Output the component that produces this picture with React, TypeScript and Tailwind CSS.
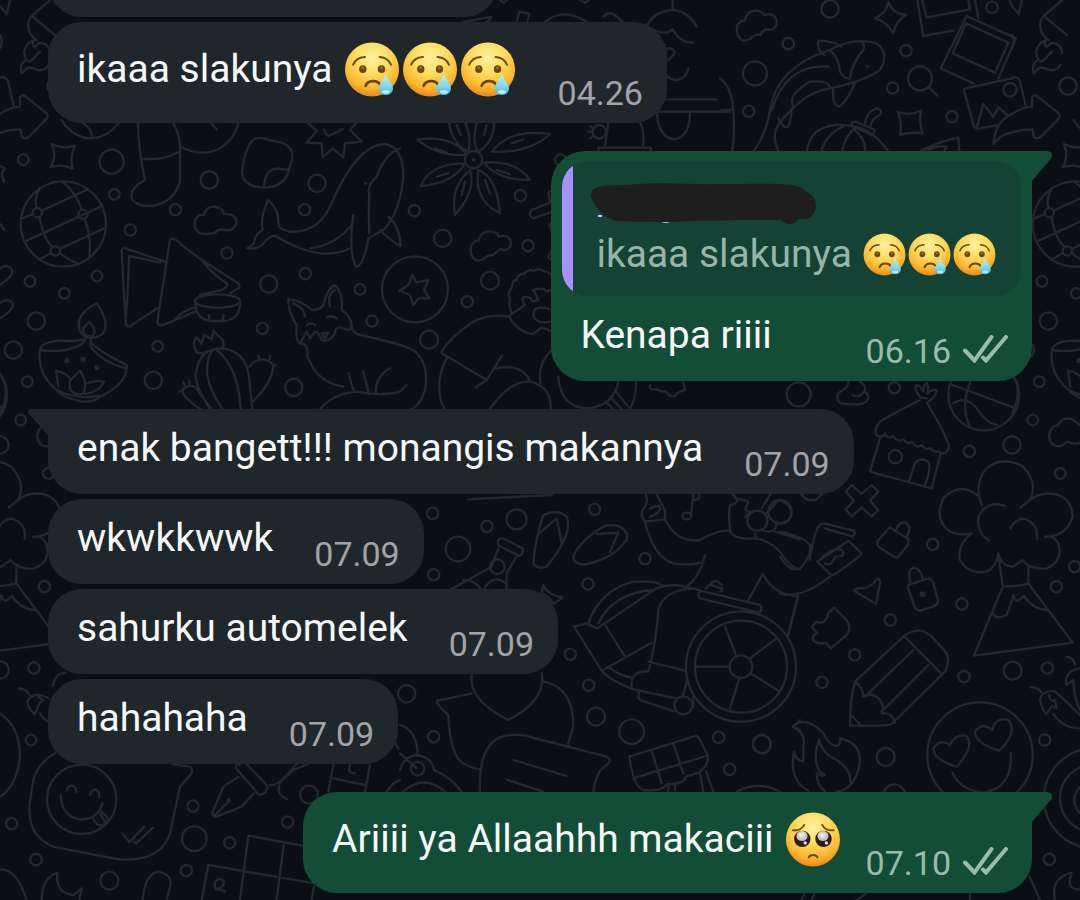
import React from 'react';

type EmojiKind = 'cry' | 'plead';

interface Message {
  text: string;
  time: string;
  mine?: boolean;
  tail?: boolean;
  emojis?: EmojiKind[];
  quote?: { text: string; emojis: EmojiKind[] };
}

interface DoodleRegion {
  transforms: string[];
  path: string;
  circles: number[][];
  dots?: number[][];
}

const messages: Message[] = [
  { text: 'ikaaa slakunya', time: '04.26', emojis: ['cry', 'cry', 'cry'] },
  {
    text: 'Kenapa riiii',
    time: '06.16',
    mine: true,
    tail: true,
    quote: { text: 'ikaaa slakunya', emojis: ['cry', 'cry', 'cry'] }
  },
  { text: 'enak bangett!!! monangis makannya', time: '07.09', tail: true },
  { text: 'wkwkkwwk', time: '07.09' },
  { text: 'sahurku automelek', time: '07.09' },
  { text: 'hahahaha', time: '07.09' },
  { text: 'Ariiii ya Allaahhh makaciii', time: '07.10', mine: true, tail: true, emojis: ['plead'] }
];

// Wallpaper line art, drawn at 3x. Some regions repeat once the tile wraps around.
const doodles: DoodleRegion[] = [
  {
    // rocket, globe, stocking, whale
    transforms: ['translate(0 0) scale(.33333)', 'translate(1012 0) scale(.33333)'],
    path:
      'M0 18L20 42L30 0M150 0L95 48L165 105M95 48C75 70 85 105 110 120' +
      'M65 220C60 200 65 185 80 180C65 160 75 130 100 122C95 140 105 145 115 130C135 125 150 140 150 160M65 220L80 205Q85 200 100 205C115 215 135 212 145 195M85 185C100 185 105 165 120 155' +
      'M0 105Q10 120 0 145M0 232Q18 228 24 245L42 320' +
      'M0 342Q30 322 60 320V292Q65 282 75 288L140 340Q146 348 140 356L85 412Q70 418 65 410L62 388Q30 388 0 398' +
      'M185 360Q220 415 275 415Q325 410 355 370M250 370Q280 390 275 415' +
      'M155 432Q190 450 226 436Q208 470 218 506Q185 490 152 502Q172 465 155 432Z' +
      'M0 498L15 505L5 520L12 545M0 672L12 690' +
      'M120 563C105 590 105 610 110 624M118 650C125 690 140 725 158 742M66 655L98 643M125 632L260 570M80 722L302 620M188 545Q230 580 245 629M253 657Q277 710 267 775M120 778L153 759M179 747L312 685M180 760Q205 780 235 792' +
      'M414 370Q415 450 435 540Q385 565 397 600Q420 625 470 615Q525 600 540 545V440Q538 400 520 370M425 475Q480 485 538 455' +
      'M540 440Q600 470 650 450Q700 425 715 370M630 365L650 388' +
      'M785 414L845 428Q880 440 877 475L862 525Q845 560 795 563Q730 560 726 520Q728 480 745 440Q755 412 785 414ZM792 560Q795 505 835 505Q850 510 864 508' +
      'M925 370L950 392L920 428L965 430L968 472L998 445L1030 472L1035 430L1085 425L1050 390L1068 370M972 388Q975 400 985 408L1028 388' +
      'M600 700Q578 685 586 660Q592 642 612 645Q618 618 645 620Q670 625 672 642Q705 640 710 665Q705 695 675 690Q655 685 645 698Q620 705 600 700Z' +
      'M805 600Q780 650 788 690Q765 700 762 730L742 745Q775 750 795 725Q810 705 828 708M805 600Q838 630 835 670Q835 690 870 695Q950 700 990 620Q1070 432 1155 432Q1210 440 1210 530Q1200 640 1150 690L1105 715Q1090 800 1068 800Q1045 760 1060 645' +
      'M828 708Q960 790 1050 745M930 745Q1010 735 1058 670M1200 445Q1155 460 1130 530Q1100 560 1108 580Q1105 640 1108 700M1165 650Q1200 680 1202 738Q1175 725 1140 690',
    circles: [
      [70, 479, 16], [335, 485, 36], [343, 583, 16], [628, 540, 26], [526, 629, 17], [391, 690, 17],
      [951, 550, 26], [914, 629, 17], [681, 759, 17], [916, 821, 17], [806, 852, 26], [90, 844, 16],
      [291, 828, 16], [193, 880, 16], [190, 672, 128], [112, 638, 14], [249, 643, 14], [166, 753, 14],
      [168, 258, 26]
    ],
    dots: [[1097, 550, 5]]
  },
  {
    // samosa, diya, cactus, fox
    transforms: ['translate(0 200) scale(.33333)', 'translate(1012 200) scale(.33333)'],
    path:
      'M365 150Q370 140 385 148L495 185M387 168L480 188M365 150Q370 260 378 375Q388 385 395 375L472 325M387 168Q385 270 378 345M510 118Q525 112 545 135L605 180L715 250Q722 258 715 265L690 280M510 118L472 365Q475 380 490 375L585 335M605 180Q640 225 680 250Q685 262 665 270L600 285M525 358Q550 330 585 322' +
      'M585 303A68 20 0 1 0 721 303A68 20 0 1 0 585 303M586 305Q585 362 640 363H670Q720 360 721 305M627 345v12M670 345v12' +
      'M120 450Q125 425 180 422Q230 425 250 418M275 430Q300 455 380 495Q385 550 300 590Q290 605 250 605Q190 595 170 570Q110 520 120 450M120 450Q180 460 230 440Q255 430 258 412M272 412V440Q310 490 380 505M170 570Q230 600 295 588' +
      'M290 310Q330 365 310 400Q270 430 240 395Q222 345 290 310ZM268 365Q295 395 275 410Q245 410 250 385Z' +
      'M175 560L168 512Q205 520 212 540L240 512Q265 550 250 580Q230 590 212 570Q205 555 212 540M258 550Q290 540 312 545Q300 575 255 582' +
      'M588 455Q575 425 590 412L605 432L612 405L635 418Q640 395 640 392L668 420Q675 440 665 445M588 455Q600 465 620 455M630 628Q575 540 590 510Q600 450 655 445Q740 445 748 540L757 628M668 628Q615 550 622 500Q625 460 640 450M722 628Q715 500 650 450' +
      'M748 500Q760 480 790 478Q820 485 820 500Q815 550 760 603M780 478l-5-10M808 478l3-10M818 495h10M602 628Q545 590 548 570Q560 555 585 560L635 628M548 570l-10 5M555 558l-5-12M568 555v-12' +
      'M865 298Q905 300 935 330Q960 330 970 315Q985 260 1005 255Q1030 280 1025 330Q1055 350 1055 380Q1050 395 1030 385Q1005 375 1005 400Q985 430 965 420Q955 395 945 395L930 415L920 395L900 430Q885 420 890 375Q865 340 865 298ZM880 310Q915 325 915 350M990 320Q980 285 1005 270M920 375Q930 365 945 375M980 352Q995 345 1010 355M965 400L985 398L975 415Z' +
      'M905 430Q925 435 922 470L940 505Q970 550 1030 560M1055 380Q1060 400 1080 405Q1200 430 1240 450Q1290 490 1275 570Q1260 620 1225 632M960 628Q1000 580 1070 575Q1150 590 1200 575L1220 555M1045 520L1060 570M1090 515L1105 575M1128 580Q1125 530 1170 505' +
      'M0 205Q20 190 35 208Q45 225 0 255M0 308Q20 295 35 305Q50 325 0 355M0 525Q35 570 0 640',
    circles: [
      [109, 363, 26], [40, 450, 26], [82, 545, 16], [473, 439, 16], [460, 541, 26], [881, 562, 26],
      [787, 385, 17], [62, 660, 16], [1080, 268, 16], [145, 820, 16], [0, 735, 26]
    ],
    dots: [[201, 482, 8], [250, 478, 8], [291, 503, 8]]
  },
  {
    // token, seated figure
    transforms: ['translate(330 230) scale(.33333)'],
    path:
      'M247 135L260 157L295 150L282 180L298 205L265 205L250 225L240 195L208 182L235 165Z' +
      'M435 90Q415 70 425 45Q435 30 445 32Q455 0 485 5Q505 8 505 20Q540 10 543 40Q540 65 510 58Q500 65 490 75Q470 75 465 85Q450 95 435 90Z' +
      'M535 260Q480 250 430 275Q360 320 333 368L470 450L515 378M470 450L438 472M350 385Q315 450 335 520L345 537M495 415Q580 400 600 455M480 537Q540 450 600 455Q665 470 662 537' +
      'M545 250Q535 225 540 205Q530 190 545 175Q545 150 560 150Q565 130 582 132Q595 115 612 123Q630 112 642 125Q660 125 668 140M535 260L585 225Q570 205 585 200Q605 200 605 215L625 210L610 180Q640 170 650 185L668 178M668 240Q610 220 610 255Q620 285 660 275M540 265Q570 310 610 312L635 292L668 305' +
      'M670 355Q620 400 632 460M685 440Q690 530 770 535Q850 530 865 455M825 515L850 537M840 500L875 537M858 485L895 530M900 537Q920 500 918 455M960 465Q955 480 975 478L1000 485Q1010 480 1015 495L1035 500Q1040 485 1065 480L1060 455',
    circles: [
      [255, 178, 99], [338, 25, 26], [480, 152, 27], [412, 215, 17], [126, 273, 17], [297, 329, 27], [594, 47, 17]
    ]
  },
  {
    // flower, bonnet figure
    transforms: ['translate(330 0) scale(.33333)'],
    path:
      'M262 418Q370 405 410 465Q320 470 262 418ZM660 402Q540 385 485 455Q600 460 660 402ZM272 558Q300 490 405 490Q370 550 272 558ZM600 540Q560 480 462 488Q500 540 600 540ZM375 645Q360 560 420 510Q440 570 375 645ZM510 640Q430 600 445 510Q500 530 510 640ZM357 368Q365 430 415 455Q425 410 405 368M440 368Q425 430 445 455Q490 430 493 368' +
      'M315 445L350 458M545 430L580 418M320 530L355 520M500 510L540 522M395 585L405 545M480 580L465 540M380 375L392 405M470 375L462 405' +
      'M835 370L825 440M930 368Q945 395 938 440M805 455V443H962V455M780 378l8 6M775 395h10M780 415l8-6' +
      'M668 605L605 630Q590 645 610 655L668 635M668 570L655 578L660 605M668 665L658 675L668 705M668 745L655 770L668 785' +
      'M950 82Q965 35 1030 30Q1075 35 1100 80M1028 0V28M950 82Q1010 110 1028 88Q1050 130 1090 128M1005 150q12-12 25 0M1015 180q20-15 18-25M1000 205Q1010 240 1040 240Q1070 235 1075 205M1003 298H1160M980 335H1200M980 335Q985 415 1035 418Q1080 410 1080 335' +
      'M510 0l10 8l12-8M750 0l15 8l12-8M560 66L568 35L598 42L592 66M645 66Q700 20 770 66M820 50Q840 30 860 50L880 66M400 66L485 50Q480 62 470 66',
    circles: [[431, 479, 26], [253, 632, 17], [571, 587, 17], [692, 480, 17], [808, 395, 20]],
    dots: [[431, 479, 6]]
  },
  {
    // koi, pumpkin, photos
    transforms: ['translate(720 0) scale(.33333)'],
    path:
      'M0 235Q35 260 40 330Q45 420 35 455M0 332L40 328M625 260L652 287' +
      'M65 120Q45 105 52 75Q62 60 75 62Q80 30 110 32Q130 36 132 46Q165 35 170 65Q168 95 140 88Q128 90 122 104Q100 102 92 116Q78 124 65 120Z' +
      'M505 5Q515 40 558 45Q525 65 520 100Q500 65 465 55Q500 40 505 5Z' +
      'M100 455Q140 400 150 330Q170 200 330 150Q400 110 470 130Q510 160 480 210Q430 245 330 265Q260 275 200 345Q160 380 165 420L175 455M315 165Q290 155 295 122Q350 125 365 140M325 150Q355 165 360 215Q375 240 390 235Q395 190 430 150Q435 135 425 125M325 200Q200 190 155 330M220 320Q200 285 270 245Q330 240 330 265M340 265Q335 310 355 320Q375 315 405 248M175 355Q195 390 205 380Q215 350 215 325' +
      'M260 455Q270 380 350 375Q450 370 505 455M303 455Q320 400 370 380M365 455Q380 400 405 385M400 385Q440 420 435 455M395 370Q400 360 420 370L465 390Q460 405 455 405L395 378ZM435 370Q440 335 470 325Q490 330 480 345Q455 355 452 378' +
      'M532 335Q565 350 604 332Q595 365 608 400Q570 395 540 405Q548 365 532 335ZM600 455Q640 430 715 412L718 455M625 450Q650 435 680 440L672 455' +
      'M592 0L610 108L700 92M606 0L620 52L750 28L745 0M765 0L775 55M740 48L888 115L835 235M740 48L662 205L760 250M738 70L865 128L825 218L698 160Z' +
      'M876 235L735 265Q730 272 735 282L762 380Q768 388 780 385L835 375M770 385L790 312L820 350L835 322L862 345M876 342Q825 365 820 432Q845 400 876 398M868 0L876 18',
    circles: [
      [330, 27, 26], [105, 220, 36], [205, 131, 17], [86, 334, 17], [558, 152, 17], [518, 264, 17],
      [696, 350, 17], [816, 22, 17], [870, 269, 20], [600, 235, 36]
    ],
    dots: [[443, 199, 5]]
  },
  {
    // hut, basketball, volcano
    transforms: ['translate(780 370) scale(.33333)', 'translate(-232 370) scale(.33333)'],
    path:
      'M510 42L700 112M572 33Q540 110 570 170M520 100Q560 75 590 115Q620 160 650 165' +
      'M205 35Q205 50 190 60Q165 70 175 95Q185 103 220 103Q262 105 265 82Q262 65 252 65Q262 50 240 35M252 65Q240 85 218 75' +
      'M440 85L420 82Q400 55 410 45Q425 50 430 65Q430 45 440 40Q448 50 442 70Q460 55 470 62Q465 85 440 98Q480 160 505 220Q510 245 490 250L475 245M420 90Q340 130 300 155Q280 180 290 195q15 12 25-5q8 20 25 8q12 20 30 10q12 18 28 8q10 20 28 10q12 18 25 8q10 15 26 10' +
      'M300 205L270 305L455 355L482 250M388 332L405 280Q420 260 445 275Q455 290 435 345' +
      'M198 365L215 345L245 372L275 345L295 365L270 392L295 420L275 440L245 412L215 440L197 418L222 392Z' +
      'M295 510L330 472L385 508Q388 520 380 530L350 565L295 530Q288 520 295 510ZM348 482Q355 455 375 457Q398 470 380 500' +
      'M385 645L445 625Q455 625 460 640L474 690Q475 705 460 710L420 722Q408 722 402 705L384 655ZM392 640Q380 600 400 593Q420 592 428 625' +
      'M222 662Q225 655 245 655Q270 655 290 628Q302 625 300 640L288 702Z' +
      'M95 770L110 755Q130 765 140 745L145 730L162 713L200 750Q215 775 200 795L152 835L138 818Q120 825 100 812Q95 795 112 790Z' +
      'M605 405Q580 340 620 295Q670 255 730 290Q775 340 750 390L722 412M590 375Q540 335 490 385Q460 450 510 485Q540 498 575 490Q530 525 540 570Q565 615 620 605Q650 590 655 550Q665 590 700 590L728 570Q750 600 800 595Q850 575 835 520Q820 495 795 500Q860 500 878 440Q875 370 800 370Q765 375 750 390M675 407Q620 390 595 440Q590 490 628 512M692 475Q705 445 735 447Q775 460 770 507' +
      'M655 550L668 650Q710 650 745 640V590M668 650L582 857L878 818L745 640M638 730Q650 750 680 735Q690 710 700 675Q705 700 720 688L732 678Q760 720 805 720' +
      'M65 373Q75 390 90 390H108L125 373M90 570Q95 520 112 475Q118 462 130 460L222 482Q228 490 218 500L135 475M112 575L205 512L245 550Q235 565 165 612Q155 618 148 610ZM115 575Q150 530 185 540Q200 560 165 560Q155 590 135 580' +
      'M0 485Q70 500 90 525Q95 560 60 595Q30 610 0 560M0 670Q60 690 150 620M52 682L25 790' +
      'M900 218Q880 225 860 215Q845 235 820 225Q795 200 820 170L835 165Q845 140 875 147Q895 160 900 165',
    circles: [
      [56, 73, 36], [343, 53, 17], [568, 244, 17], [458, 523, 17], [346, 260, 20], [829, 650, 17],
      [884, 590, 17], [546, 702, 17], [331, 750, 17], [224, 855, 17], [0, 425, 35], [611, 75, 106]
    ],
    dots: [[428, 673, 9]]
  },
  {
    // flip-flops, wheelchair, hearts, chocolate
    transforms: ['translate(400 480) scale(.33333)'],
    path:
      'M500 110Q470 85 430 105Q405 180 400 250Q410 270 440 260Q490 200 503 150Q505 120 500 110ZM418 160L470 115L485 190M680 160Q660 125 610 140Q540 180 520 230Q520 255 560 252Q640 235 675 185Q685 175 680 160ZM590 162L655 158L630 215' +
      'M295 180Q305 170 320 180L368 205Q372 220 358 228L298 198Q290 190 295 180ZM295 205L275 260L155 327M350 230Q325 270 320 280V327M190 300Q225 300 242 327M252 327Q280 280 318 310M430 315Q440 345 488 352L460 372Q450 350 425 340Z' +
      'M738 45Q745 60 735 80Q715 100 735 125Q760 230 820 250Q870 258 900 248M735 125L795 118Q830 190 900 180Q950 150 990 152Q1000 180 1060 175Q1120 180 1150 230Q1175 265 1200 268M770 45L795 90V118M750 85Q785 70 780 90Q770 105 750 110M915 225Q900 290 860 320' +
      'M990 152Q985 100 990 75Q1010 75 1015 55L1045 65L1035 90L1050 95L1035 112M1000 45L1012 60M1065 160L1068 175M1085 85L1110 45M1100 100L1135 60Q1180 70 1172 110Q1160 135 1130 130Q1125 165 1085 150M1125 155L1200 178' +
      'M847 108A13 10 0 1 0 873 108A13 10 0 1 0 847 108M873 105L880 45M878 62L898 55V45' +
      'M565 430Q600 330 700 305Q770 300 790 318M595 430Q640 340 755 330M522 440L560 430L592 445L770 325Q820 305 870 325M522 440L605 572L755 488M615 435L675 530M745 575Q770 480 775 390Q790 330 880 325L905 335M605 572Q640 610 715 632M625 560Q660 590 695 592M745 575Q690 570 695 622M745 545L855 572M828 655L720 632Q708 655 725 662L825 695M862 600L848 648M880 648V680' +
      'M900 332L1080 375Q1090 385 1078 398L900 355Q890 345 900 332ZM918 325Q925 310 940 318L965 325Q968 335 960 335M930 315Q945 290 965 315M1045 360L1088 282Q1120 345 1195 348L1165 465' +
      'M990 560H888M975 440L1010 530M1050 535L1130 475M1052 580L1135 632M1018 595L990 685' +
      'M215 585Q205 660 325 720Q440 660 425 580M215 640L112 662Q105 670 145 705Q150 840 200 855Q220 865 240 868M430 605Q520 620 520 740L503 795' +
      'M240 935Q235 800 300 772Q330 760 380 768L620 830Q635 838 625 850L600 872Q585 900 580 935M340 840L500 888M322 900L430 935' +
      'M0 735Q50 750 53 820M0 870Q10 830 50 825Q95 830 102 870Q150 890 185 935M10 935Q70 880 135 935M0 820L50 865' +
      'M688 830L885 768Q895 768 900 780L925 830Q920 880 860 888Q850 915 800 912Q790 935 730 930Q700 920 688 830M700 895L918 828M755 812L785 910M820 790L850 880M900 880L910 935M918 875L940 935M805 915v20M825 912v20' +
      'M1200 720L1180 740L1200 750M1010 935Q1075 900 1140 935M205 58L455 45',
    circles: [
      [98, 100, 17], [261, 139, 17], [350, 118, 30], [174, 207, 37], [101, 284, 17], [292, 260, 22],
      [584, 88, 17], [735, 236, 17], [564, 312, 17], [511, 523, 17], [566, 616, 17], [588, 710, 27],
      [695, 755, 37], [956, 772, 17], [989, 868, 17], [1085, 792, 27], [20, 641, 26], [101, 770, 17],
      [53, 866, 20], [1023, 560, 165], [1023, 560, 138], [1023, 560, 34], [850, 676, 27], [1072, 122, 30]
    ]
  },
  {
    // pencil, fire, heart eyes
    transforms: ['translate(740 600) scale(.33333)'],
    path:
      'M345 245L492 108Q540 75 575 110L612 150Q635 175 615 215L455 372Q450 378 330 377Q330 300 345 245M492 108L605 222M385 280L520 150M430 330L565 195M345 245Q370 265 370 290Q400 275 420 300Q435 320 425 340Q455 335 465 368M333 345L362 375' +
      'M158 380Q200 345 250 400Q270 440 290 438Q305 430 300 415Q370 430 358 500Q340 570 290 575M158 380Q200 400 190 440Q190 470 190 485Q165 480 162 455Q145 540 205 572M330 545Q335 510 290 480Q245 460 238 420Q215 480 240 515Q260 525 250 528L230 520Q230 555 255 575' +
      'M650 500Q580 480 580 445Q600 415 630 435Q645 400 680 408Q705 440 650 500ZM778 452Q705 430 705 395Q725 365 757 390Q765 350 805 360Q835 395 778 452ZM637 518Q665 575 735 577Q820 560 812 458' +
      'M872 262Q895 260 908 282M900 300Q905 275 940 272Q960 285 1020 345M900 300Q905 330 920 342L935 318L950 325L945 300Q930 310 928 285M940 342Q970 385 1020 385M978 170Q1000 170 1005 195M1020 205Q975 210 978 255L1000 240Q1000 290 1020 330' +
      'M1020 560Q985 600 1020 640M945 900Q930 835 995 818Q975 870 1020 868M868 828L900 900M690 880v20M185 900l8-20M215 900l8-20M350 900l30-20',
    circles: [
      [246, 247, 17], [672, 230, 17], [818, 212, 27], [922, 204, 17], [914, 420, 17], [66, 433, 27],
      [437, 471, 27], [928, 778, 17], [463, 585, 32], [720, 465, 158], [1062, 595, 150], [1062, 595, 102]
    ]
  },
  {
    // chat bubble face, fountain pen, crossword
    transforms: ['translate(0 660) scale(.33333)'],
    path:
      'M0 160Q60 200 60 290Q50 380 0 410M165 280Q110 310 98 370L88 440Q85 530 160 560L350 597Q480 610 510 520L540 380L575 340Q580 320 565 320L515 312' +
      'M200 392q5-15 15-16q14 5 14 20M270 405q5-18 18-16q12 5 10 22M182 405Q185 470 240 478Q290 480 308 430M280 475Q290 500 310 495Q330 480 320 470L300 450M300 460L315 485M368 520L388 547L432 500M402 545L408 550L458 504' +
      'M708 325Q705 315 720 312M708 325L775 402Q790 408 800 390Q805 378 795 370L740 312M715 350L670 380L638 455Q635 470 650 470L725 440L762 400M645 465L685 425M810 375Q830 380 880 330L925 312M862 418Q820 400 845 360L890 312' +
      'M1000 315L985 395M1110 315L1095 395M1000 355L1095 375M1050 315Q1040 340 1065 340M745 527L935 562M745 527L720 720M625 615L1000 680M625 615L605 720M852 548L830 720M945 660L935 720M665 688Q640 695 645 668Q655 650 670 662Q675 680 655 685L675 695' +
      'M0 628Q50 625 80 720M125 720Q125 655 172 638Q165 700 220 705L245 685L238 720M428 720Q435 640 475 635Q520 645 510 680L500 720' +
      'M55 85Q80 85 88 105M145 115Q100 90 82 125Q85 150 105 162L118 130L130 120L115 110M120 160Q130 180 150 188M158 78Q165 40 195 38M1190 200Q1175 240 1195 265M1160 395Q1180 365 1200 360',
    circles: [
      [102, 24, 17], [93, 240, 16], [35, 491, 17], [108, 599, 17], [328, 662, 27], [583, 536, 37],
      [689, 548, 17], [579, 438, 17], [863, 486, 17], [927, 404, 27], [559, 632, 17], [0, 30, 26], [245, 418, 104]
    ],
    dots: [[686, 421, 7]]
  }
];

const Wallpaper: React.FC = () => (
  <svg
    className="absolute inset-0 h-full w-full"
    viewBox="0 0 1080 900"
    preserveAspectRatio="xMidYMin slice"
    fill="none"
    stroke="#22282c"
    strokeWidth="7"
    strokeLinecap="round"
    strokeLinejoin="round"
    aria-hidden="true"
  >
    {doodles.map((region) =>
      region.transforms.map((transform) => (
        <g key={transform} transform={transform}>
          <path d={region.path} />
          {region.circles.map(([cx, cy, r], i) => (
            <circle key={i} cx={cx} cy={cy} r={r} />
          ))}
          {region.dots?.map(([cx, cy, r], i) => (
            <circle key={i} cx={cx} cy={cy} r={r} fill="#22282c" stroke="none" />
          ))}
        </g>
      ))
    )}
  </svg>
);

const EmojiDefs: React.FC = () => (
  <svg className="absolute h-0 w-0" aria-hidden="true">
    <defs>
      <radialGradient id="face" cx=".5" cy=".28" r=".74">
        <stop offset="0" stopColor="#fff0a0" />
        <stop offset=".42" stopColor="#ffdc5e" />
        <stop offset=".76" stopColor="#fdb62c" />
        <stop offset="1" stopColor="#e5801a" />
      </radialGradient>
      <linearGradient id="tear" x1="0" y1="0" x2="0" y2="1">
        <stop offset="0" stopColor="#c4f1f6" />
        <stop offset=".6" stopColor="#7fd6ec" />
        <stop offset="1" stopColor="#3fb0dd" />
      </linearGradient>
      <radialGradient id="shine" cx=".45" cy=".4" r=".6">
        <stop offset="0" stopColor="#f2f2f2" />
        <stop offset="1" stopColor="#b5b2b0" />
      </radialGradient>
    </defs>
  </svg>
);

const Emoji: React.FC<{ kind: EmojiKind; className: string }> = ({ kind, className }) => (
  <svg
    className={className}
    viewBox="0 0 58 58"
    role="img"
    aria-label={kind === 'cry' ? 'crying face' : 'pleading face'}
    fill="none"
    strokeLinecap="round"
  >
    <circle cx="29" cy="29" r="27" fill="url(#face)" />
    {kind === 'cry' ? (
      <>
        <path d="M10.2 24.2C12 19.5 16.5 16.6 22 16.4M36.6 16.4C42 16.8 46.3 19.8 48 24.2" stroke="#6b4a12" strokeWidth="2" />
        <ellipse cx="19.8" cy="28.6" rx="3.7" ry="3.9" fill="#6b4713" />
        <ellipse cx="38.5" cy="28.6" rx="3.7" ry="3.9" fill="#6b4713" />
        <circle cx="19.8" cy="27.4" r="1.4" fill="#96713a" />
        <circle cx="38.5" cy="27.4" r="1.4" fill="#96713a" />
        <path d="M22.6 45.2C25 39.4 34 39 37.4 44.4" stroke="#6b4310" strokeWidth="2.8" />
        <path d="M42.8 33.4C44.5 39 50 43 50 48A7.2 6.6 0 0 1 35.6 48C35.6 43 41.2 39 42.8 33.4Z" fill="url(#tear)" />
        <ellipse cx="42.8" cy="51.4" rx="4" ry="1.8" fill="#b6edf5" />
      </>
    ) : (
      <>
        <path d="M9 19.8C13.5 20.2 18 18.6 20.2 14.4M38.2 14.4C40.5 18.6 45 20.2 49.6 19.8" stroke="#7a5312" strokeWidth="2" />
        <circle cx="18.3" cy="28.4" r="8.2" fill="#2b1d19" />
        <circle cx="39.5" cy="28.4" r="8.2" fill="#2b1d19" />
        <ellipse cx="18" cy="25.6" rx="5.6" ry="5" fill="url(#shine)" />
        <ellipse cx="39" cy="25.6" rx="5.6" ry="5" fill="url(#shine)" />
        <circle cx="21.2" cy="32.4" r="1.7" fill="#e8e8e8" />
        <circle cx="42.4" cy="32.4" r="1.7" fill="#e8e8e8" />
        <path d="M24.8 46.8C26.4 43.8 31.8 43.8 33.4 46.8" stroke="#6b4310" strokeWidth="2" />
      </>
    )}
  </svg>
);

const Ticks: React.FC = () => (
  <svg
    className="mb-2 ml-3 h-[28px] w-[45px]"
    viewBox="0 0 45 28"
    fill="none"
    stroke="#9abcae"
    strokeWidth="4"
    strokeLinecap="round"
    role="img"
    aria-label="delivered"
  >
    <path d="M2 15.5L11.5 25.5L28.5 2M20 22.5L23 25.5L43 2" />
  </svg>
);

const Tail: React.FC<{ mine?: boolean }> = ({ mine }) =>
  mine ? (
    <svg className="absolute top-0 left-full h-[30px] w-5" viewBox="0 0 20 30" fill="#144d37" aria-hidden="true">
      <path d="M0 0H15.5A4.5 4.5 0 0 1 19 7.4L0 30Z" />
    </svg>
  ) : (
    <svg className="absolute top-0 right-full h-[26px] w-5" viewBox="0 0 20 26" fill="#20272a" aria-hidden="true">
      <path d="M20 0H3.5A3 3 0 0 0 1.4 5.4L20 26Z" />
    </svg>
  );

// The sender's name is painted over, only slivers of it peek out below.
const HiddenName: React.FC = () => (
  <svg className="-ml-[6px] h-[42px] w-[227px]" viewBox="0 0 227 42" role="img" aria-label="hidden name">
    <path d="M8 32h4v2H8zM71 38h9l-2 2h-5z" fill="#cdbcff" />
    <path
      d="M8 4C20 1 34 3 48 1C80 -1 105 2 130 1C160 1 188 0 203 2Q211 3 215 8Q226 12 226 23Q225 35 215 36H208Q206 41 200 41Q195 41 191 37C150 36 130 38 100 38C80 40 55 39 28 38Q18 37 11 29Q5 24 1 14Q0 6 8 4Z"
      fill="#1e1e1e"
    />
  </svg>
);

const Bubble: React.FC<{ message: Message; spaced: boolean }> = ({ message, spaced }) => {
  const { text, time, mine, tail, emojis, quote } = message;
  const tone = mine ? 'self-end bg-[#144d37]' : 'self-start bg-[#20272a]';
  const corner = tail ? (mine ? 'rounded-tr-none' : 'rounded-tl-none') : '';

  return (
    <li className={`relative rounded-[34px] ${tone} ${corner} ${spaced ? 'mt-7' : 'mt-[5px]'}`}>
      {tail && <Tail mine={mine} />}
      {quote && (
        <blockquote className="mx-[11px] mt-[10px] flex overflow-hidden rounded-[26px] bg-[#144234]">
          <div className="w-[11px] shrink-0 bg-[#a791fb]"></div>
          <div className="flex flex-col gap-[3px] pt-[22px] pr-6 pb-[15px] pl-[23px]">
            <HiddenName />
            <div className="flex items-center gap-[10px]">
              <p className="text-[39px] leading-[53px] text-[#96b5a8]">{quote.text}</p>
              <div className="flex">
                {quote.emojis.map((kind, i) => (
                  <Emoji key={i} kind={kind} className="h-[53px] w-[45px]" />
                ))}
              </div>
            </div>
          </div>
        </blockquote>
      )}
      <div className={`flex items-end justify-between pt-[13px] pr-6 pb-[10px] pl-[29px] ${mine ? 'gap-6' : 'gap-[41px]'}`}>
        <div className="mb-[9px] flex items-center gap-[10px]">
          <p className="text-[39px] leading-[53px] text-[#f5f9fa]">{text}</p>
          {emojis && (
            <div className="flex">
              {emojis.map((kind, i) => (
                <Emoji key={i} kind={kind} className="h-[69px] w-[58px]" />
              ))}
            </div>
          )}
        </div>
        <div className="flex items-end">
          <time className={`text-[34px] leading-10 ${mine ? 'text-[#9abcae]' : 'text-[#a0a4a6]'}`}>{time}</time>
          {mine && <Ticks />}
        </div>
      </div>
    </li>
  );
};

const App: React.FC = () => {
  return (
    <main className="relative min-h-screen overflow-hidden bg-[#0a0f13] font-['Roboto',sans-serif]">
      <Wallpaper />
      <EmojiDefs />
      <div className="relative px-12 pb-1">
        {/* end of the previous message, scrolled out of view */}
        <div className="-mt-20 h-[97px] w-[450px] rounded-[34px] bg-[#20272a]"></div>
        <ul className="flex flex-col">
          {messages.map((message, index) => (
            <Bubble
              key={index}
              message={message}
              spaced={index > 0 && Boolean(message.mine) !== Boolean(messages[index - 1].mine)}
            />
          ))}
        </ul>
      </div>
    </main>
  );
};

export default App;
